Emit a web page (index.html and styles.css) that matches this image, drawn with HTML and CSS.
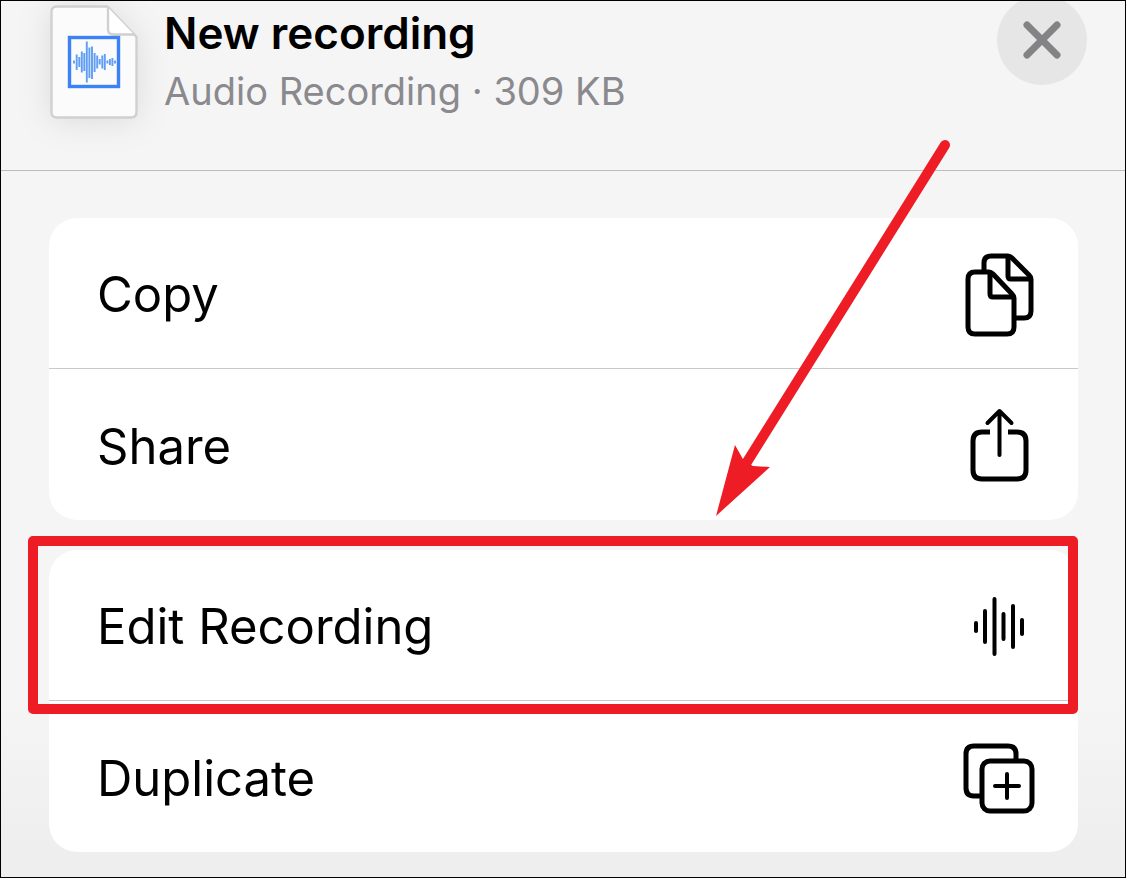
FILE: index.html
```
<!DOCTYPE html>
<html lang="en">
<head>
    <meta charset="UTF-8">
    <meta name="viewport" content="width=device-width, initial-scale=1.0">
    <title>New recording</title>
    <link rel="stylesheet" href="styles.css">
</head>
<body>
    <main class="sheet">
        <header class="sheet-header">
            <svg class="file-icon" width="88" height="114" viewBox="0 0 88 114" aria-hidden="true">
                <path d="M7 1.5H57.5L86.5 32V107Q86.5 112.5 81 112.5H7Q1.5 112.5 1.5 107V7Q1.5 1.5 7 1.5Z" fill="#fbfbfb" stroke="#d0d0d0" stroke-width="2.4"/>
                <path d="M58 2.5V24Q58 29.5 63.5 29.5H84" fill="#fff" stroke="#d0d0d0" stroke-width="2.4"/>
                <rect x="19.5" y="32.5" width="49" height="49" fill="#fbfbfb" stroke="#3b82f6" stroke-width="3.4"/>
                <path d="M24 55.5V58.5M26.7 49.5V65M29.3 52V62M31.8 46.5V67.5M34.3 48V66M36.8 36.5V77.5M39.4 42.5V73M42 41.5V74M44.6 48V67M47.2 50.5V63.5M49.7 54V59.5M52.3 50.5V63.5M54.8 49V65M57.4 55.5V58.5M59.9 54V60M62.4 53V61M65 55.5V58.5" fill="none" stroke="#5f9df6" stroke-width="1.9"/>
            </svg>
            <div class="file-info">
                <h1>New recording</h1>
                <p>Audio Recording · 309 KB</p>
            </div>
            <button class="close" type="button" aria-label="Close">
                <svg width="40" height="40" viewBox="0 0 40 40" aria-hidden="true">
                    <path d="M5 5L35 35M35 5L5 35" stroke="#838385" stroke-width="7" stroke-linecap="round"/>
                </svg>
            </button>
        </header>

        <div class="actions">
            <div class="group">
                <button class="row" type="button">
                    <span>Copy</span>
                    <svg width="70" height="84" viewBox="0 0 70 84" aria-hidden="true">
                        <path d="M19 17V10Q19 3 26 3H43Q45 3 47 5L64 22Q66 24 66 26V58Q66 65 59 65H51" />
                        <path d="M43 4V23Q43 26 46 26H64" />
                        <path d="M10 19H24Q26 19 28 21L47 41Q49 43 49 45V74Q49 81 42 81H10Q3 81 3 74V26Q3 19 10 19Z" />
                        <path d="M25 20V41Q25 44 28 44H48" />
                    </svg>
                </button>
                <button class="row" type="button">
                    <span>Share</span>
                    <svg width="70" height="84" viewBox="0 0 70 84" aria-hidden="true">
                        <path class="flat" d="M25 28H17Q8 28 8 37V66Q8 75 17 75H52Q61 75 61 66V37Q61 28 52 28H43" />
                        <path class="thin" d="M34.5 51V8M22.5 19L34.5 7L46.5 19" />
                    </svg>
                </button>
            </div>

            <div class="group">
                <button class="row marked" type="button">
                    <span>Edit Recording</span>
                    <svg width="70" height="84" viewBox="0 0 70 84" aria-hidden="true">
                        <path class="thin" d="M11 38V46M20 26V57M29.5 14V69M38.5 29V54M48 21V62M57 35V49" />
                    </svg>
                </button>
                <button class="row" type="button">
                    <span>Duplicate</span>
                    <svg width="70" height="84" viewBox="0 0 70 84" aria-hidden="true">
                        <path d="M16 60H9Q1 60 1 52V18Q1 10 9 10H43Q51 10 51 18V23" />
                        <rect x="17" y="25" width="50" height="50" rx="8" />
                        <path class="thin" d="M30 50H54M42 38V62" />
                    </svg>
                </button>
            </div>
        </div>

        <!-- arrow pointing at the Edit Recording row -->
        <svg class="arrow" width="240" height="384" viewBox="0 0 240 384" aria-hidden="true">
            <path d="M235 10L37 327" stroke="#ee1c25" stroke-width="10" stroke-linecap="round"/>
            <path d="M6 381L25 310L34 326L43 331L60 332Z" fill="#ee1c25"/>
        </svg>
    </main>
</body>
</html>
```

FILE: styles.css
```
* {
    box-sizing: border-box;
}

body {
    margin: 0;
    font-family: Inter, "Liberation Sans", sans-serif;
    color: #000;
}

.sheet {
    position: relative;
    min-height: 100vh;
    overflow: hidden;
    border: 1px solid #000;
    background: linear-gradient(#f5f5f5 80%, #eee 97%);
}

/* Header */
.sheet-header {
    display: flex;
    align-items: flex-start;
    height: 170px;
    padding: 4px 38px 0 49px;
    border-bottom: 1px solid #bdbdbf;
}

.file-icon {
    flex: none;
    overflow: visible;
    filter: drop-shadow(0 2px 16px rgba(0, 0, 0, 0.1));
}

.file-info {
    flex: 1;
    padding-left: 26px;
}

.file-info h1 {
    margin: 0;
    font-size: 44px;
    line-height: 56px;
    font-weight: 600;
}

.file-info p {
    margin: 0;
    font-size: 38px;
    line-height: 60px;
    color: #8a8a8e;
}

.close {
    display: flex;
    align-items: center;
    justify-content: center;
    width: 90px;
    height: 90px;
    margin-top: -10px;
    padding: 0;
    border: none;
    border-radius: 50%;
    background: #e6e6e6;
    cursor: pointer;
}

/* Action lists */
.actions {
    display: flex;
    flex-direction: column;
    gap: 30px;
    padding: 47px 47px 25px 48px;
}

.group {
    border-radius: 28px;
    background: #fff;
}

.row {
    position: relative;
    display: flex;
    align-items: center;
    justify-content: space-between;
    width: 100%;
    height: 150px;
    padding: 3px 43px 0 48px;
    border: none;
    background: none;
    font: inherit;
    font-size: 49px;
    color: inherit;
    cursor: pointer;
}

.row + .row {
    height: 152px;
    border-top: 1px solid #c9c9cb;
}

.row svg {
    fill: none;
    overflow: visible;
    stroke: #000;
    stroke-width: 5;
    stroke-linecap: round;
    stroke-linejoin: round;
}

.row .thin {
    stroke-width: 4;
}

.row .flat {
    stroke-linecap: butt;
}

/* Red frame around the highlighted row */
.marked::after {
    content: "";
    position: absolute;
    inset: -14px 0 -14px -21px;
    border: 10px solid #ee1c25;
    border-radius: 5px;
    z-index: 1;
}

.arrow {
    position: absolute;
    top: 134px;
    right: 175px;
    fill: none;
    pointer-events: none;
}
```
